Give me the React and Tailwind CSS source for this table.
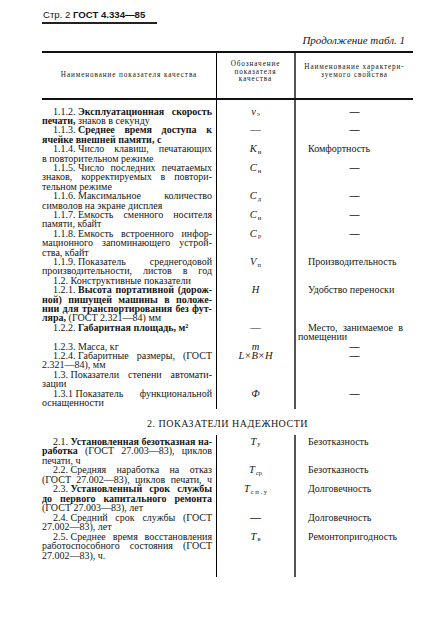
import React from "react";

function Tok({ t }) {
  const parts = t.split("_");
  return (
    <span className="whitespace-nowrap">
      {parts.map((p, i) => {
        const b = p.startsWith("*");
        const txt = p.replace(/\*/g, "");
        return (
          <React.Fragment key={i}>
            {i > 0 ? "\u00a0" : ""}
            {b ? <span className="font-bold">{txt}</span> : <span>{txt}</span>}
          </React.Fragment>
        );
      })}
    </span>
  );
}

function Line({ s, j, i }) {
  const toks = s.split(" ");
  if (j) {
    return (
      <div className={i ? "flex justify-between pl-[11px]" : "flex justify-between"}>
        {toks.map((t, k) => (
          <Tok key={k} t={t} />
        ))}
      </div>
    );
  }
  return (
    <div className={i ? "whitespace-nowrap pl-[11px]" : "whitespace-nowrap"}>
      {toks.map((t, k) => (
        <React.Fragment key={k}>
          {k > 0 ? " " : ""}
          <Tok t={t} />
        </React.Fragment>
      ))}
    </div>
  );
}

function Sym({ b, sub }) {
  return (
    <span className="italic">
      {b}
      {sub ? <sub className="not-italic text-[6.5px] ml-[1px]">{sub}</sub> : null}
    </span>
  );
}

const Dash = () => <div className="text-center font-bold">—</div>;
const ThinDash = () => <span>—</span>;
const Prop = ({ t }) => <div className="whitespace-nowrap pl-[12px]">{t}</div>;

const sec1 = [
  {
    l: [
      { s: "1.1.2._*Эксплуатационная* *скорость*", j: 1, i: 1 },
      { s: "*печати,* знаков в секунду" },
    ],
    sym: <Sym b="v" sub="э" />,
    p: <Dash />,
  },
  {
    l: [
      { s: "1.1.3._*Среднее* *время* *доступа* *к*", j: 1, i: 1 },
      { s: "*ячейке* *внешней* *памяти,* *с*" },
    ],
    sym: <ThinDash />,
    p: <Dash />,
  },
  {
    l: [
      { s: "1.1.4._Число клавиш, печатающих", j: 1, i: 1 },
      { s: "в повторительном режиме" },
    ],
    sym: <Sym b="K" sub="н" />,
    p: <Prop t="Комфортность" />,
  },
  {
    l: [
      { s: "1.1.5._Число последних печатаемых", j: 1, i: 1 },
      { s: "знаков, корректируемых в повтори-", j: 1 },
      { s: "тельном режиме" },
    ],
    sym: <Sym b="C" sub="н" />,
    p: <Dash />,
  },
  {
    l: [
      { s: "1.1.6._Максимальное количество", j: 1, i: 1 },
      { s: "символов на экране дисплея" },
    ],
    sym: <Sym b="C" sub="д" />,
    p: <Dash />,
  },
  {
    l: [
      { s: "1.1.7._Емкость сменного носителя", j: 1, i: 1 },
      { s: "памяти, кбайт" },
    ],
    sym: <Sym b="C" sub="н" />,
    p: <Dash />,
  },
  {
    l: [
      { s: "1.1.8._Емкость встроенного инфор-", j: 1, i: 1 },
      { s: "мационного запоминающего устрой-", j: 1 },
      { s: "ства, кбайт" },
    ],
    sym: <Sym b="C" sub="р" />,
    p: <Dash />,
  },
  {
    l: [
      { s: "1.1.9._Показатель среднегодовой", j: 1, i: 1 },
      { s: "производительности, листов в год", j: 1 },
    ],
    sym: <Sym b="V" sub="п" />,
    p: <Prop t="Производительность" />,
  },
  {
    l: [{ s: "1.2._Конструктивные показатели", i: 1 }],
    sym: null,
    p: null,
  },
  {
    l: [
      { s: "1.2.1._*Высота* *портативной* *(дорож-*", j: 1, i: 1 },
      { s: "*ной)* *пишущей* *машины* *в* *положе-*", j: 1 },
      { s: "*нии* *для* *транспортирования* *без* *фут-*", j: 1 },
      { s: "*ляра,* (ГОСТ 2.321—84) мм" },
    ],
    sym: <Sym b="H" />,
    p: <Prop t="Удобство переноски" />,
  },
  {
    l: [{ s: "1.2.2._*Габаритная* *площадь,* *м²*", i: 1 }],
    sym: <ThinDash />,
    p: (
      <div>
        <div className="flex justify-between pl-[12px] pr-[10px]">
          <span>Место,</span>
          <span>занимаемое</span>
          <span>в</span>
        </div>
        <div className="pl-[2px]">помещении</div>
      </div>
    ),
  },
  {
    l: [{ s: "1.2.3._Масса, кг", i: 1 }],
    sym: <Sym b="m" />,
    p: <Dash />,
  },
  {
    l: [
      { s: "1.2.4._Габаритные размеры, (ГОСТ", j: 1, i: 1 },
      { s: "2.321—84), мм" },
    ],
    sym: <span className="italic">L×B×H</span>,
    p: <Dash />,
  },
  {
    l: [
      { s: "1.3._Показатели степени автомати-", j: 1, i: 1 },
      { s: "зации" },
    ],
    sym: null,
    p: null,
  },
  {
    l: [
      { s: "1.3.1_Показатель функциональной", j: 1, i: 1 },
      { s: "оснащенности" },
    ],
    sym: <span className="italic">Ф</span>,
    p: <Dash />,
  },
];

const sec2 = [
  {
    l: [
      { s: "2.1._*Установленная* *безотказная* *на-*", j: 1, i: 1 },
      { s: "*работка* (ГОСТ 27.003—83), циклов", j: 1 },
      { s: "печати, ч" },
    ],
    sym: <Sym b="T" sub="у" />,
    p: <Prop t="Безотказность" />,
  },
  {
    l: [
      { s: "2.2._Средняя наработка на отказ", j: 1, i: 1 },
      { s: "(ГОСТ 27.002—83), циклов печати, ч", j: 1 },
    ],
    sym: <Sym b="T" sub="ср" />,
    p: <Prop t="Безотказность" />,
  },
  {
    l: [
      { s: "2.3._*Установленный* *срок* *службы*", j: 1, i: 1 },
      { s: "*до* *первого* *капитального* *ремонта*", j: 1 },
      { s: "(ГОСТ 27.003—83), лет" },
    ],
    sym: <Sym b="T" sub="с п . у" />,
    p: <Prop t="Долговечность" />,
  },
  {
    l: [
      { s: "2.4._Средний срок службы (ГОСТ", j: 1, i: 1 },
      { s: "27.002—83), лет" },
    ],
    sym: <span className="font-bold">—</span>,
    p: <Prop t="Долговечность" />,
  },
  {
    l: [
      { s: "2.5._Среднее время восстановления", j: 1, i: 1 },
      { s: "работоспособного состояния (ГОСТ", j: 1 },
      { s: "27.002—83), ч." },
    ],
    sym: <Sym b="T" sub="в" />,
    p: <Prop t="Ремонтопригодность" />,
  },
];

function Rows({ rows }) {
  return rows.map((r, k) => (
    <React.Fragment key={k}>
      <div className="border-r border-black pr-[4px]">
        {r.l.map((ln, q) => (
          <Line key={q} s={ln.s} j={ln.j} i={ln.i} />
        ))}
      </div>
      <div className="border-r-2 border-[#555] text-center text-[10.5px]">{r.sym}</div>
      <div>{r.p}</div>
    </React.Fragment>
  ));
}

export default function App() {
  return (
    <div className="w-[423px] h-[636px] bg-white text-[#161616] font-['Liberation_Serif','DejaVu_Serif',serif] overflow-hidden">
      <div className="ml-[42px] w-[371px] pt-[9px]">
        <div className="h-[12px] leading-[12px] text-[9.6px] font-['Liberation_Sans','DejaVu_Sans',sans-serif] whitespace-nowrap pl-[1px]">
          Стр. 2 <span className="font-bold">ГОСТ 4.334—85</span>
        </div>
        <div className="mt-[1px] h-[1.5px] w-[115px] bg-[#222]"></div>
        <div className="mt-[10px] h-[13px] leading-[13px] text-[11px] italic text-right pr-[8px] whitespace-nowrap">
          Продолжение табл. 1
        </div>
        <div className="mt-[4px] grid grid-cols-[175px_79px_117px] h-[49px] border-t-2 border-b-2 border-[#111] text-[7.2px] leading-[7.8px] tracking-[0.9px]">
          <div className="border-r border-black flex items-center justify-center pt-[1px] whitespace-nowrap">
            Наименование показателя качества
          </div>
          <div className="border-r-2 border-[#555] flex flex-col items-center justify-center pb-[5px]">
            <div>Обозначение</div>
            <div>показателя</div>
            <div>качества</div>
          </div>
          <div className="flex flex-col items-center justify-center pb-[6px] whitespace-nowrap">
            <div>Наименование характери-</div>
            <div>зуемого свойства</div>
          </div>
        </div>
        <div className="grid grid-cols-[175px_79px_117px] text-[10px] leading-[9.4px]">
          <div className="h-[7px] border-r border-black"></div>
          <div className="h-[7px] border-r-2 border-[#555]"></div>
          <div className="h-[7px]"></div>
          <Rows rows={sec1} />
          <div className="h-[1px] border-r border-black"></div>
          <div className="h-[1px] border-r-2 border-[#555]"></div>
          <div className="h-[1px]"></div>
        </div>
        <div className="mt-[9px] h-[12px] leading-[12px] text-[10px] tracking-[0.5px] text-center whitespace-nowrap">
          2. ПОКАЗАТЕЛИ НАДЕЖНОСТИ
        </div>
        <div className="mt-[5px] grid grid-cols-[175px_79px_117px] text-[10px] leading-[9.5px]">
          <div className="h-[2px] border-r border-black"></div>
          <div className="h-[2px] border-r-2 border-[#555]"></div>
          <div className="h-[2px]"></div>
          <Rows rows={sec2} />
          <div className="h-[17px] border-r border-black"></div>
          <div className="h-[17px] border-r-2 border-[#555]"></div>
          <div className="h-[17px]"></div>
        </div>
      </div>
    </div>
  );
}
